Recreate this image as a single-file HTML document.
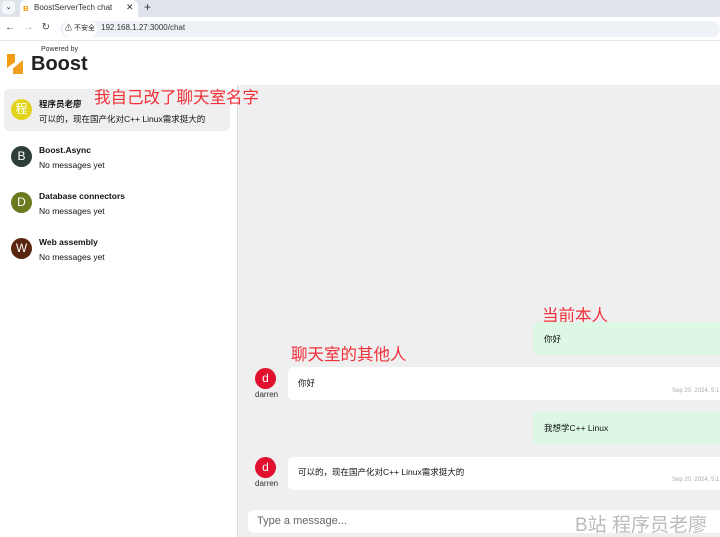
<html><head><style>
body{margin:0;width:720px;height:537px;overflow:hidden;font-family:"Liberation Sans","Noto Sans CJK SC",sans-serif;position:relative;background:#fff}
.a{position:absolute}
.av{position:absolute;width:21px;height:21px;border-radius:50%;color:#fff;font-size:12px;text-align:center;line-height:21px}
.t{font-size:8.5px;color:#111}
.red{color:#f0303a;font-size:16.5px}
</style></head><body>
<div class="a" style="left:0;top:0;width:720px;height:17px;background:#dfe4ec"></div>
<div class="a" style="left:2px;top:1px;width:13px;height:13px;background:#f3f5f8;border-radius:4px;font-size:7px;text-align:center;line-height:13px">⌄</div>
<div class="a" style="left:20px;top:0;width:118px;height:17px;background:#fff;border-radius:6px 6px 0 0"></div>
<div class="a" style="left:23px;top:3px;font-size:9px;color:#f39c12;font-weight:bold">ʙ</div>
<div class="a" style="left:34px;top:3px;font-size:8px;color:#333">BoostServerTech chat</div>
<div class="a" style="left:126px;top:2px;font-size:9px;color:#333">✕</div>
<div class="a" style="left:144px;top:0px;font-size:12px;color:#333">+</div>
<div class="a" style="left:0;top:17px;width:720px;height:23px;background:#fff;border-bottom:1px solid #e5e5e5"></div>
<div class="a" style="left:5px;top:22px;font-size:10px;color:#444">←&nbsp;&nbsp;&nbsp;<span style="color:#aaa">→</span>&nbsp;&nbsp;&nbsp;↻</div>
<div class="a" style="left:60px;top:21px;width:660px;height:16px;background:#eef1f6;border-radius:8px"></div>
<div class="a" style="left:63px;top:21px;width:34px;height:16px;background:#fff;border-radius:8px;font-size:7px;line-height:16px;text-align:center;color:#222">⚠ 不安全</div>
<div class="a" style="left:101px;top:23px;font-size:8px;color:#333">192.168.1.27:3000/chat</div>
<div class="a" style="left:41px;top:46px;font-size:7px;color:#333">Powered by</div>
<div class="a" style="left:7px;top:54px;width:8px;height:20px;background:#f39c12;clip-path:polygon(0 0,100% 0,100% 40%,0 70%,0 100%)"></div>
<div class="a" style="left:13px;top:60px;width:10px;height:14px;background:#f0a020;clip-path:polygon(100% 0,100% 100%,0 100%,0 60%)"></div>
<div class="a" style="left:31px;top:53px;font-size:20px;font-weight:bold;color:#222">Boost</div>
<div class="a" style="left:0;top:85px;width:237px;height:452px;background:#fff;border-right:1px solid #ddd"></div>
<div class="a" style="left:238px;top:85px;width:482px;height:452px;background:#efefef"></div>
<div class="a" style="left:4px;top:89px;width:226px;height:42px;background:#efefef;border-radius:5px"></div>
<div class="av" style="left:11px;top:99px;background:#e2d41c">程</div>
<div class="a t" style="left:39px;top:98px;font-weight:bold">程序员老廖</div>
<div class="a t" style="left:39px;top:113px">可以的，现在国产化对C++ Linux需求挺大的</div>
<div class="av" style="left:11px;top:146px;background:#2e3d36">B</div>
<div class="a t" style="left:39px;top:145px;font-weight:bold">Boost.Async</div>
<div class="a t" style="left:39px;top:160px">No messages yet</div>
<div class="av" style="left:11px;top:192px;background:#6a7a1e">D</div>
<div class="a t" style="left:39px;top:191px;font-weight:bold">Database connectors</div>
<div class="a t" style="left:39px;top:206px">No messages yet</div>
<div class="av" style="left:11px;top:238px;background:#5a2610">W</div>
<div class="a t" style="left:39px;top:237px;font-weight:bold">Web assembly</div>
<div class="a t" style="left:39px;top:252px">No messages yet</div>
<div class="a red" style="left:94px;top:84px">我自己改了聊天室名字</div>
<div class="a red" style="left:542px;top:302px">当前本人</div>
<div class="a red" style="left:291px;top:341px">聊天室的其他人</div>
<div class="a" style="left:533px;top:322px;width:190px;height:33px;background:#dcf8e4;border-radius:5px"></div>
<div class="a t" style="left:544px;top:333px">你好</div>
<div class="av" style="left:255px;top:368px;background:#e0102e">d</div>
<div class="a" style="left:255px;top:390px;font-size:8px;color:#333">darren</div>
<div class="a" style="left:288px;top:367px;width:440px;height:33px;background:#fff;border-radius:5px"></div>
<div class="a t" style="left:298px;top:377px">你好</div>
<div class="a" style="left:672px;top:388px;font-size:6px;color:#aaa">Sep 20, 2024, 5:1</div>
<div class="a" style="left:533px;top:412px;width:190px;height:32px;background:#dcf8e4;border-radius:5px"></div>
<div class="a t" style="left:544px;top:422px">我想学C++ Linux</div>
<div class="av" style="left:255px;top:457px;background:#e0102e">d</div>
<div class="a" style="left:255px;top:479px;font-size:8px;color:#333">darren</div>
<div class="a" style="left:288px;top:457px;width:440px;height:33px;background:#fff;border-radius:5px"></div>
<div class="a t" style="left:298px;top:466px">可以的，现在国产化对C++ Linux需求挺大的</div>
<div class="a" style="left:672px;top:477px;font-size:6px;color:#aaa">Sep 20, 2024, 5:1</div>
<div class="a" style="left:248px;top:510px;width:480px;height:23px;background:#fff;border-radius:6px"></div>
<div class="a" style="left:257px;top:515px;font-size:11px;color:#666">Type a message...</div>
<div class="a" style="left:575px;top:510px;font-size:19px;color:#bbb">B站 程序员老廖</div>
</body></html>
